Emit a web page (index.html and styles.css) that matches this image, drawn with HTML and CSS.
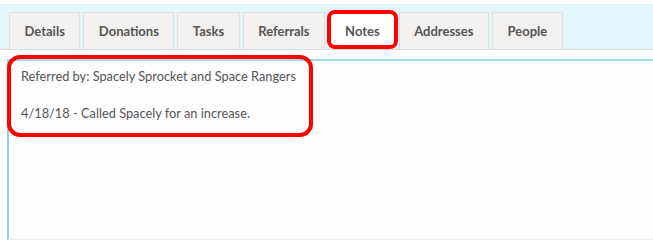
FILE: index.html
```html
<html>
   <head>
      <title>Notes</title>
      <link rel="stylesheet" href="styles.css">
   </head>
   <body>
      <div class="tabbar">
         <div class="tab">Details</div>
         <div class="tab">Donations</div>
         <div class="tab">Tasks</div>
         <div class="tab">Referrals</div>
         <div class="tab active">Notes</div>
         <div class="tab">Addresses</div>
         <div class="tab">People</div>
      </div>
      <div class="panel">
         <div class="notes">
            <p>Referred by: Spacely Sprocket and Space Rangers</p>
            <p>4/18/18 - Called Spacely for an increase.</p>
         </div>
         <div class="callout"></div>
      </div>
   </body>
</html>
```

FILE: styles.css
```css
body { margin: 0; background: #ffffff; font-family: Lato, "Noto Sans", sans-serif; color: #555555; overflow: hidden; }

.tabbar { margin-top: 4px; height: 37px; padding: 8px 0 0 9px; background: #e3f4fb; border-bottom: 1px solid #dcdcdc; display: flex; gap: 3px; }
.tab { position: relative; height: 36px; padding: 0 14.5px; background: #f2f1ef; border: 1px solid #dedede; border-bottom: none; font-size: 13px; font-weight: bold; line-height: 36px; color: #555555; }
.tab.active { background: #ffffff; margin-left: 1px; padding: 0 15px; }
.tab.active::after { content: ""; position: absolute; top: -3px; left: -3px; right: -3px; bottom: 0px; border: 4px solid #ff0000; border-radius: 8px; }

.panel { position: relative; margin: 9px 0 0 7px; height: 178px; background: #fdfdfd; border-top: 2px solid #9fdaf3; border-left: 2px solid #8fd2f0; border-bottom: 1px solid #eeeeee; }
.notes { padding: 6px 12px; font-size: 12.8px; line-height: 18.5px; }
.notes p { margin: 0 0 18.5px 0; }
.callout { position: absolute; top: -6px; left: -2px; width: 298px; height: 74px; border: 4px solid #ff0000; border-radius: 13px; }
```
